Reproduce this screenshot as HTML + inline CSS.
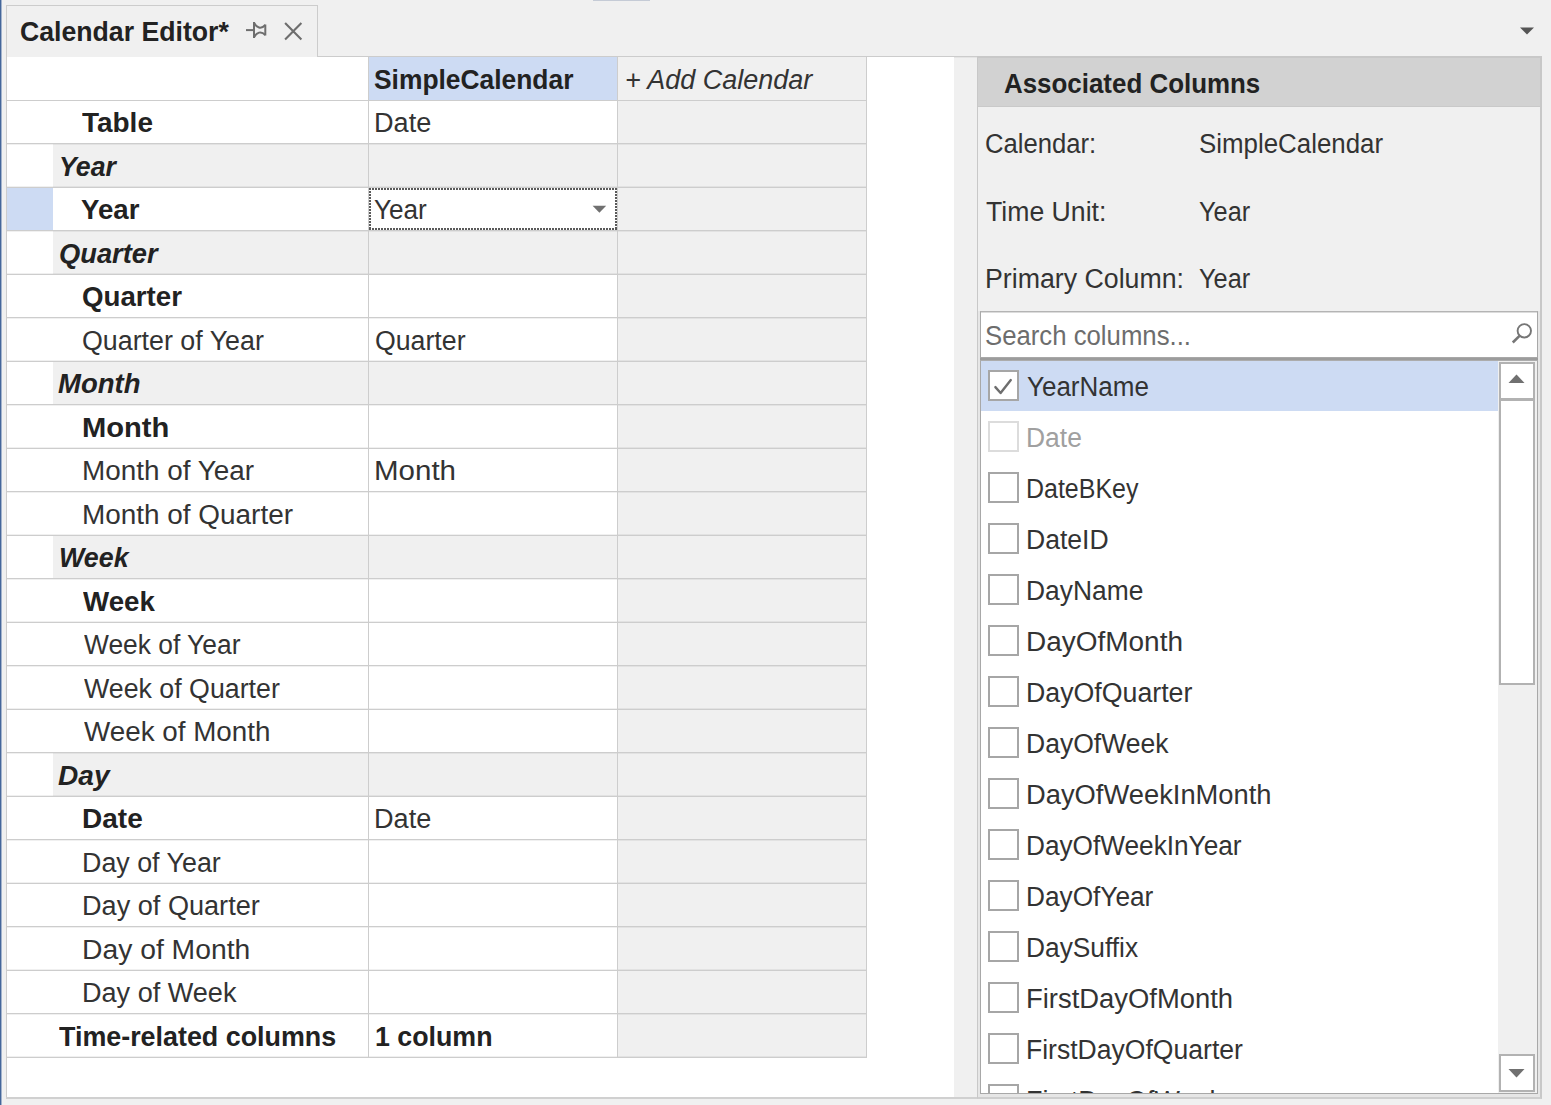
<!DOCTYPE html>
<html><head><meta charset="utf-8"><style>
html,body{margin:0;padding:0;}
body{width:1551px;height:1105px;overflow:hidden;position:relative;background:#f0f0f0;font-family:"Liberation Sans",sans-serif;}
.t{position:absolute;white-space:pre;line-height:1;transform-origin:0 0;}
</style></head><body>
<div style="position:absolute;left:0px;top:0px;width:1px;height:1105px;background:#44669a;"></div>
<div style="position:absolute;left:1px;top:0px;width:1px;height:1105px;background:#a3b3cc;"></div>
<div style="position:absolute;left:593px;top:0px;width:57px;height:1px;background:#c5cbd6;"></div>
<div style="position:absolute;left:6px;top:5px;width:312px;height:52px;background:#f0f0f0;box-sizing:border-box;border:1px solid #cccccc;border-bottom:none;"></div>
<div class="t" style="left:20.11px;top:19px;font-size:27px;font-weight:bold;font-style:normal;color:#222222;transform:scaleX(0.9872)">Calendar Editor*</div>
<svg style="position:absolute;left:240px;top:15px" width="70" height="30" viewBox="240 15 70 30">
<g stroke="#6e6e6e" stroke-width="2" fill="none" stroke-linecap="butt">
<path d="M246 30.1 H254"/>
<path d="M254 22 V38"/>
<path d="M254 22.6 C256.5 27.8 261 29.6 265.3 25"/>
<path d="M254 37.4 C256.5 32.3 261 30.6 265.3 35"/>
<path d="M265.3 24.5 V35.5"/>
</g>
<path d="M285.1 22.9 L301.4 39.4 M301.4 22.9 L285.1 39.4" stroke="#6e6e6e" stroke-width="2.1" fill="none"/>
</svg>
<div style="position:absolute;left:317px;top:56px;width:1225px;height:1px;background:#cccccc;"></div>
<div style="position:absolute;left:317px;top:57px;width:660px;height:1px;background:#e4e4e4;"></div>
<svg style="position:absolute;left:1519px;top:27px" width="16" height="8" viewBox="0 0 16 8"><path d="M1 0.5 H15 L8 7.5 Z" fill="#555"/></svg>
<div style="position:absolute;left:6px;top:57px;width:1px;height:1041px;background:#cccccc;"></div>
<div style="position:absolute;left:7px;top:57px;width:947px;height:1040px;background:#ffffff;"></div>
<div style="position:absolute;left:6px;top:1097px;width:972px;height:2px;background:#d0d0d0;"></div>
<div style="position:absolute;left:369px;top:57px;width:248px;height:43px;background:#cddbf3;"></div>
<div style="position:absolute;left:618px;top:57px;width:248px;height:43px;background:#f0f0f0;"></div>
<div class="t" style="left:374.02px;top:67px;font-size:27px;font-weight:bold;font-style:normal;color:#222222;transform:scaleX(0.9773)">SimpleCalendar</div>
<div class="t" style="left:625.00px;top:67px;font-size:27px;font-weight:normal;font-style:italic;color:#333333;transform:scaleX(0.9989)">+ Add Calendar</div>
<div class="t" style="left:82.40px;top:110px;font-size:27px;font-weight:bold;font-style:normal;color:#222222;transform:scaleX(1.0353)">Table</div>
<div class="t" style="left:374.09px;top:110px;font-size:27px;font-weight:normal;font-style:normal;color:#333333;transform:scaleX(1.0037)">Date</div>
<div style="position:absolute;left:618px;top:101px;width:248px;height:42px;background:#f0f0f0;"></div>
<div style="position:absolute;left:53px;top:144px;width:315px;height:43px;background:#f0f0f0;"></div>
<div style="position:absolute;left:369px;top:144px;width:248px;height:43px;background:#f0f0f0;"></div>
<div class="t" style="left:58.52px;top:154px;font-size:27px;font-weight:bold;font-style:italic;color:#222222;transform:scaleX(0.9895)">Year</div>
<div style="position:absolute;left:618px;top:144px;width:248px;height:43px;background:#f0f0f0;"></div>
<div style="position:absolute;left:7px;top:188px;width:46px;height:42px;background:#cddbf3;"></div>
<div class="t" style="left:81.18px;top:197px;font-size:27px;font-weight:bold;font-style:normal;color:#222222;transform:scaleX(1.0232)">Year</div>
<div class="t" style="left:374.13px;top:197px;font-size:27px;font-weight:normal;font-style:normal;color:#333333;transform:scaleX(0.9679)">Year</div>
<div style="position:absolute;left:618px;top:188px;width:248px;height:42px;background:#f0f0f0;"></div>
<div style="position:absolute;left:53px;top:231px;width:315px;height:43px;background:#f0f0f0;"></div>
<div style="position:absolute;left:369px;top:231px;width:248px;height:43px;background:#f0f0f0;"></div>
<div class="t" style="left:58.69px;top:241px;font-size:27px;font-weight:bold;font-style:italic;color:#222222;transform:scaleX(1.0112)">Quarter</div>
<div style="position:absolute;left:618px;top:231px;width:248px;height:43px;background:#f0f0f0;"></div>
<div class="t" style="left:81.97px;top:284px;font-size:27px;font-weight:bold;font-style:normal;color:#222222;transform:scaleX(1.0250)">Quarter</div>
<div style="position:absolute;left:618px;top:275px;width:248px;height:42px;background:#f0f0f0;"></div>
<div class="t" style="left:82.01px;top:328px;font-size:27px;font-weight:normal;font-style:normal;color:#333333;transform:scaleX(0.9929)">Quarter of Year</div>
<div class="t" style="left:374.81px;top:328px;font-size:27px;font-weight:normal;font-style:normal;color:#333333;transform:scaleX(0.9889)">Quarter</div>
<div style="position:absolute;left:618px;top:318px;width:248px;height:43px;background:#f0f0f0;"></div>
<div style="position:absolute;left:53px;top:362px;width:315px;height:42px;background:#f0f0f0;"></div>
<div style="position:absolute;left:369px;top:362px;width:248px;height:42px;background:#f0f0f0;"></div>
<div class="t" style="left:58.28px;top:371px;font-size:27px;font-weight:bold;font-style:italic;color:#222222;transform:scaleX(1.0190)">Month</div>
<div style="position:absolute;left:618px;top:362px;width:248px;height:42px;background:#f0f0f0;"></div>
<div class="t" style="left:81.64px;top:415px;font-size:27px;font-weight:bold;font-style:normal;color:#222222;transform:scaleX(1.0792)">Month</div>
<div style="position:absolute;left:618px;top:405px;width:248px;height:43px;background:#f0f0f0;"></div>
<div class="t" style="left:81.74px;top:458px;font-size:27px;font-weight:normal;font-style:normal;color:#333333;transform:scaleX(1.0323)">Month of Year</div>
<div class="t" style="left:373.91px;top:458px;font-size:27px;font-weight:normal;font-style:normal;color:#333333;transform:scaleX(1.0930)">Month</div>
<div style="position:absolute;left:618px;top:449px;width:248px;height:42px;background:#f0f0f0;"></div>
<div class="t" style="left:81.73px;top:502px;font-size:27px;font-weight:normal;font-style:normal;color:#333333;transform:scaleX(1.0337)">Month of Quarter</div>
<div style="position:absolute;left:618px;top:492px;width:248px;height:43px;background:#f0f0f0;"></div>
<div style="position:absolute;left:53px;top:536px;width:315px;height:42px;background:#f0f0f0;"></div>
<div style="position:absolute;left:369px;top:536px;width:248px;height:42px;background:#f0f0f0;"></div>
<div class="t" style="left:58.51px;top:545px;font-size:27px;font-weight:bold;font-style:italic;color:#222222;transform:scaleX(0.9928)">Week</div>
<div style="position:absolute;left:618px;top:536px;width:248px;height:42px;background:#f0f0f0;"></div>
<div class="t" style="left:83.00px;top:589px;font-size:27px;font-weight:bold;font-style:normal;color:#222222;transform:scaleX(1.0257)">Week</div>
<div style="position:absolute;left:618px;top:579px;width:248px;height:43px;background:#f0f0f0;"></div>
<div class="t" style="left:83.80px;top:632px;font-size:27px;font-weight:normal;font-style:normal;color:#333333;transform:scaleX(0.9769)">Week of Year</div>
<div style="position:absolute;left:618px;top:623px;width:248px;height:42px;background:#f0f0f0;"></div>
<div class="t" style="left:83.80px;top:676px;font-size:27px;font-weight:normal;font-style:normal;color:#333333;transform:scaleX(0.9909)">Week of Quarter</div>
<div style="position:absolute;left:618px;top:666px;width:248px;height:43px;background:#f0f0f0;"></div>
<div class="t" style="left:83.80px;top:719px;font-size:27px;font-weight:normal;font-style:normal;color:#333333;transform:scaleX(1.0291)">Week of Month</div>
<div style="position:absolute;left:618px;top:710px;width:248px;height:42px;background:#f0f0f0;"></div>
<div style="position:absolute;left:53px;top:753px;width:315px;height:43px;background:#f0f0f0;"></div>
<div style="position:absolute;left:369px;top:753px;width:248px;height:43px;background:#f0f0f0;"></div>
<div class="t" style="left:58.26px;top:763px;font-size:27px;font-weight:bold;font-style:italic;color:#222222;transform:scaleX(1.0400)">Day</div>
<div style="position:absolute;left:618px;top:753px;width:248px;height:43px;background:#f0f0f0;"></div>
<div class="t" style="left:81.72px;top:806px;font-size:27px;font-weight:bold;font-style:normal;color:#222222;transform:scaleX(1.0375)">Date</div>
<div class="t" style="left:374.09px;top:806px;font-size:27px;font-weight:normal;font-style:normal;color:#333333;transform:scaleX(1.0037)">Date</div>
<div style="position:absolute;left:618px;top:797px;width:248px;height:42px;background:#f0f0f0;"></div>
<div class="t" style="left:81.81px;top:850px;font-size:27px;font-weight:normal;font-style:normal;color:#333333;transform:scaleX(0.9942)">Day of Year</div>
<div style="position:absolute;left:618px;top:840px;width:248px;height:43px;background:#f0f0f0;"></div>
<div class="t" style="left:81.79px;top:893px;font-size:27px;font-weight:normal;font-style:normal;color:#333333;transform:scaleX(1.0040)">Day of Quarter</div>
<div style="position:absolute;left:618px;top:884px;width:248px;height:42px;background:#f0f0f0;"></div>
<div class="t" style="left:81.70px;top:937px;font-size:27px;font-weight:normal;font-style:normal;color:#333333;transform:scaleX(1.0478)">Day of Month</div>
<div style="position:absolute;left:618px;top:927px;width:248px;height:43px;background:#f0f0f0;"></div>
<div class="t" style="left:81.79px;top:980px;font-size:27px;font-weight:normal;font-style:normal;color:#333333;transform:scaleX(1.0026)">Day of Week</div>
<div style="position:absolute;left:618px;top:971px;width:248px;height:42px;background:#f0f0f0;"></div>
<div class="t" style="left:59.30px;top:1024px;font-size:27px;font-weight:bold;font-style:normal;color:#222222;transform:scaleX(0.9950)">Time-related columns</div>
<div class="t" style="left:375.32px;top:1024px;font-size:27px;font-weight:bold;font-style:normal;color:#222222;transform:scaleX(0.9913)">1 column</div>
<div style="position:absolute;left:618px;top:1014px;width:248px;height:43px;background:#f0f0f0;"></div>
<div style="position:absolute;left:7px;top:100px;width:860px;height:1px;background:#cdcdcd;"></div>
<div style="position:absolute;left:7px;top:143px;width:860px;height:1px;background:#cdcdcd;"></div>
<div style="position:absolute;left:7px;top:144px;width:860px;height:1px;background:rgba(90,90,90,0.09);"></div>
<div style="position:absolute;left:7px;top:187px;width:860px;height:1px;background:#cdcdcd;"></div>
<div style="position:absolute;left:7px;top:186px;width:860px;height:1px;background:rgba(90,90,90,0.09);"></div>
<div style="position:absolute;left:7px;top:230px;width:860px;height:1px;background:#cdcdcd;"></div>
<div style="position:absolute;left:7px;top:231px;width:860px;height:1px;background:rgba(90,90,90,0.09);"></div>
<div style="position:absolute;left:7px;top:274px;width:860px;height:1px;background:#cdcdcd;"></div>
<div style="position:absolute;left:7px;top:273px;width:860px;height:1px;background:rgba(90,90,90,0.09);"></div>
<div style="position:absolute;left:7px;top:317px;width:860px;height:1px;background:#cdcdcd;"></div>
<div style="position:absolute;left:7px;top:318px;width:860px;height:1px;background:rgba(90,90,90,0.09);"></div>
<div style="position:absolute;left:7px;top:361px;width:860px;height:1px;background:#cdcdcd;"></div>
<div style="position:absolute;left:7px;top:360px;width:860px;height:1px;background:rgba(90,90,90,0.09);"></div>
<div style="position:absolute;left:7px;top:404px;width:860px;height:1px;background:#cdcdcd;"></div>
<div style="position:absolute;left:7px;top:405px;width:860px;height:1px;background:rgba(90,90,90,0.09);"></div>
<div style="position:absolute;left:7px;top:448px;width:860px;height:1px;background:#cdcdcd;"></div>
<div style="position:absolute;left:7px;top:447px;width:860px;height:1px;background:rgba(90,90,90,0.09);"></div>
<div style="position:absolute;left:7px;top:491px;width:860px;height:1px;background:#cdcdcd;"></div>
<div style="position:absolute;left:7px;top:492px;width:860px;height:1px;background:rgba(90,90,90,0.09);"></div>
<div style="position:absolute;left:7px;top:535px;width:860px;height:1px;background:#cdcdcd;"></div>
<div style="position:absolute;left:7px;top:534px;width:860px;height:1px;background:rgba(90,90,90,0.09);"></div>
<div style="position:absolute;left:7px;top:578px;width:860px;height:1px;background:#cdcdcd;"></div>
<div style="position:absolute;left:7px;top:579px;width:860px;height:1px;background:rgba(90,90,90,0.09);"></div>
<div style="position:absolute;left:7px;top:622px;width:860px;height:1px;background:#cdcdcd;"></div>
<div style="position:absolute;left:7px;top:621px;width:860px;height:1px;background:rgba(90,90,90,0.09);"></div>
<div style="position:absolute;left:7px;top:665px;width:860px;height:1px;background:#cdcdcd;"></div>
<div style="position:absolute;left:7px;top:666px;width:860px;height:1px;background:rgba(90,90,90,0.09);"></div>
<div style="position:absolute;left:7px;top:709px;width:860px;height:1px;background:#cdcdcd;"></div>
<div style="position:absolute;left:7px;top:708px;width:860px;height:1px;background:rgba(90,90,90,0.09);"></div>
<div style="position:absolute;left:7px;top:752px;width:860px;height:1px;background:#cdcdcd;"></div>
<div style="position:absolute;left:7px;top:753px;width:860px;height:1px;background:rgba(90,90,90,0.09);"></div>
<div style="position:absolute;left:7px;top:796px;width:860px;height:1px;background:#cdcdcd;"></div>
<div style="position:absolute;left:7px;top:795px;width:860px;height:1px;background:rgba(90,90,90,0.09);"></div>
<div style="position:absolute;left:7px;top:839px;width:860px;height:1px;background:#cdcdcd;"></div>
<div style="position:absolute;left:7px;top:840px;width:860px;height:1px;background:rgba(90,90,90,0.09);"></div>
<div style="position:absolute;left:7px;top:883px;width:860px;height:1px;background:#cdcdcd;"></div>
<div style="position:absolute;left:7px;top:882px;width:860px;height:1px;background:rgba(90,90,90,0.09);"></div>
<div style="position:absolute;left:7px;top:926px;width:860px;height:1px;background:#cdcdcd;"></div>
<div style="position:absolute;left:7px;top:927px;width:860px;height:1px;background:rgba(90,90,90,0.09);"></div>
<div style="position:absolute;left:7px;top:970px;width:860px;height:1px;background:#cdcdcd;"></div>
<div style="position:absolute;left:7px;top:969px;width:860px;height:1px;background:rgba(90,90,90,0.09);"></div>
<div style="position:absolute;left:7px;top:1013px;width:860px;height:1px;background:#cdcdcd;"></div>
<div style="position:absolute;left:7px;top:1014px;width:860px;height:1px;background:rgba(90,90,90,0.09);"></div>
<div style="position:absolute;left:7px;top:1057px;width:860px;height:1px;background:#cdcdcd;"></div>
<div style="position:absolute;left:7px;top:1056px;width:860px;height:1px;background:rgba(90,90,90,0.09);"></div>
<div style="position:absolute;left:368px;top:57px;width:1px;height:1001px;background:#cdcdcd;"></div>
<div style="position:absolute;left:617px;top:57px;width:1px;height:1001px;background:#cdcdcd;"></div>
<div style="position:absolute;left:866px;top:57px;width:1px;height:1001px;background:#cdcdcd;"></div>
<div style="position:absolute;left:369px;top:188px;width:248px;height:2px;background:repeating-linear-gradient(90deg,#5a5a5a 0 2px,transparent 2px 3px)"></div>
<div style="position:absolute;left:369px;top:228px;width:248px;height:2px;background:repeating-linear-gradient(90deg,#5a5a5a 0 2px,transparent 2px 3px)"></div>
<div style="position:absolute;left:369px;top:188px;width:2px;height:42px;background:repeating-linear-gradient(180deg,#5a5a5a 0 2px,transparent 2px 3px)"></div>
<div style="position:absolute;left:615px;top:188px;width:2px;height:42px;background:repeating-linear-gradient(180deg,#5a5a5a 0 2px,transparent 2px 3px)"></div>
<svg style="position:absolute;left:590px;top:200px" width="20" height="20" viewBox="590 200 20 20"><path d="M592.6 205.8 H606.2 L599.4 212.8 Z" fill="#707070"/></svg>
<div style="position:absolute;left:977px;top:56px;width:565px;height:1043px;background:#f0f0f0;box-sizing:border-box;border-left:1px solid #c8c8c8;border-right:2px solid #c8c8c8;border-top:2px solid #c8c8c8;border-bottom:2px solid #cecece;"></div>
<div style="position:absolute;left:978px;top:311px;width:562px;height:786px;background:#e6e6e6;"></div>
<div style="position:absolute;left:978px;top:58px;width:562px;height:48px;background:#d2d2d2;"></div>
<div style="position:absolute;left:978px;top:106px;width:562px;height:1px;background:#c9c9c9;"></div>
<div class="t" style="left:1003.74px;top:71px;font-size:27px;font-weight:bold;font-style:normal;color:#222222;transform:scaleX(0.9596)">Associated Columns</div>
<div class="t" style="left:985.45px;top:131px;font-size:27px;font-weight:normal;font-style:normal;color:#333333;transform:scaleX(0.9500)">Calendar:</div>
<div class="t" style="left:1198.74px;top:131px;font-size:27px;font-weight:normal;font-style:normal;color:#333333;transform:scaleX(0.9581)">SimpleCalendar</div>
<div class="t" style="left:985.51px;top:199px;font-size:27px;font-weight:normal;font-style:normal;color:#333333;transform:scaleX(0.9866)">Time Unit:</div>
<div class="t" style="left:1198.56px;top:199px;font-size:27px;font-weight:normal;font-style:normal;color:#333333;transform:scaleX(0.9377)">Year</div>
<div class="t" style="left:984.52px;top:266px;font-size:27px;font-weight:normal;font-style:normal;color:#333333;transform:scaleX(0.9898)">Primary Column:</div>
<div class="t" style="left:1198.56px;top:266px;font-size:27px;font-weight:normal;font-style:normal;color:#333333;transform:scaleX(0.9377)">Year</div>
<div style="position:absolute;left:980px;top:311px;width:558px;height:47px;background:#ffffff;box-sizing:border-box;border:1px solid #a8a8a8;border-top-color:#b4b4b4;box-shadow:inset 0 1px 0 #dcdcdc;"></div>
<div class="t" style="left:985.05px;top:323px;font-size:27px;font-weight:normal;font-style:normal;color:#6d6d6d;transform:scaleX(0.9531)">Search columns...</div>
<svg style="position:absolute;left:1495px;top:305px" width="50" height="60" viewBox="1495 305 50 60">
<circle cx="1524.3" cy="330.8" r="6.7" stroke="#767676" stroke-width="1.9" fill="none"/>
<path d="M1519.5 335.8 L1512.8 342.5" stroke="#767676" stroke-width="2.6" fill="none"/>
</svg>
<div style="position:absolute;left:980px;top:359px;width:558px;height:735px;background:#ffffff;box-sizing:border-box;border:1px solid #a8a8a8;border-top:none;"></div>
<div style="position:absolute;left:980px;top:358px;width:558px;height:2px;background:#9c9c9c;"></div>
<div style="position:absolute;left:980px;top:360px;width:558px;height:1px;background:#acacac;"></div>
<div style="position:absolute;left:981px;top:361px;width:517px;height:50px;background:#cddbf3;"></div>
<div style="position:absolute;left:981px;top:359px;width:556px;height:734px;overflow:hidden">
<div style="position:absolute;left:7px;top:11px;width:31px;height:31px;box-sizing:border-box;border:2px solid #a6a6a6;background:#fff"></div>
<div class="t" style="left:46.04px;top:15px;font-size:27px;font-weight:normal;font-style:normal;color:#333333;transform:scaleX(0.9629)">YearName</div>
<div style="position:absolute;left:7px;top:62px;width:31px;height:31px;box-sizing:border-box;border:2px solid #dcdcdc;background:#fff"></div>
<div class="t" style="left:45.04px;top:66px;font-size:27px;font-weight:normal;font-style:normal;color:#a0a0a0;transform:scaleX(0.9796)">Date</div>
<div style="position:absolute;left:7px;top:113px;width:31px;height:31px;box-sizing:border-box;border:2px solid #a6a6a6;background:#fff"></div>
<div class="t" style="left:45.15px;top:117px;font-size:27px;font-weight:normal;font-style:normal;color:#333333;transform:scaleX(0.9252)">DateBKey</div>
<div style="position:absolute;left:7px;top:164px;width:31px;height:31px;box-sizing:border-box;border:2px solid #a6a6a6;background:#fff"></div>
<div class="t" style="left:45.03px;top:168px;font-size:27px;font-weight:normal;font-style:normal;color:#333333;transform:scaleX(0.9840)">DateID</div>
<div style="position:absolute;left:7px;top:215px;width:31px;height:31px;box-sizing:border-box;border:2px solid #a6a6a6;background:#fff"></div>
<div class="t" style="left:45.04px;top:219px;font-size:27px;font-weight:normal;font-style:normal;color:#333333;transform:scaleX(0.9778)">DayName</div>
<div style="position:absolute;left:7px;top:266px;width:31px;height:31px;box-sizing:border-box;border:2px solid #a6a6a6;background:#fff"></div>
<div class="t" style="left:44.93px;top:270px;font-size:27px;font-weight:normal;font-style:normal;color:#333333;transform:scaleX(1.0358)">DayOfMonth</div>
<div style="position:absolute;left:7px;top:317px;width:31px;height:31px;box-sizing:border-box;border:2px solid #a6a6a6;background:#fff"></div>
<div class="t" style="left:45.02px;top:321px;font-size:27px;font-weight:normal;font-style:normal;color:#333333;transform:scaleX(0.9898)">DayOfQuarter</div>
<div style="position:absolute;left:7px;top:368px;width:31px;height:31px;box-sizing:border-box;border:2px solid #a6a6a6;background:#fff"></div>
<div class="t" style="left:45.03px;top:372px;font-size:27px;font-weight:normal;font-style:normal;color:#333333;transform:scaleX(0.9825)">DayOfWeek</div>
<div style="position:absolute;left:7px;top:419px;width:31px;height:31px;box-sizing:border-box;border:2px solid #a6a6a6;background:#fff"></div>
<div class="t" style="left:44.98px;top:423px;font-size:27px;font-weight:normal;font-style:normal;color:#333333;transform:scaleX(1.0121)">DayOfWeekInMonth</div>
<div style="position:absolute;left:7px;top:470px;width:31px;height:31px;box-sizing:border-box;border:2px solid #a6a6a6;background:#fff"></div>
<div class="t" style="left:45.06px;top:474px;font-size:27px;font-weight:normal;font-style:normal;color:#333333;transform:scaleX(0.9705)">DayOfWeekInYear</div>
<div style="position:absolute;left:7px;top:521px;width:31px;height:31px;box-sizing:border-box;border:2px solid #a6a6a6;background:#fff"></div>
<div class="t" style="left:45.06px;top:525px;font-size:27px;font-weight:normal;font-style:normal;color:#333333;transform:scaleX(0.9713)">DayOfYear</div>
<div style="position:absolute;left:7px;top:572px;width:31px;height:31px;box-sizing:border-box;border:2px solid #a6a6a6;background:#fff"></div>
<div class="t" style="left:45.05px;top:576px;font-size:27px;font-weight:normal;font-style:normal;color:#333333;transform:scaleX(0.9743)">DaySuffix</div>
<div style="position:absolute;left:7px;top:623px;width:31px;height:31px;box-sizing:border-box;border:2px solid #a6a6a6;background:#fff"></div>
<div class="t" style="left:44.97px;top:627px;font-size:27px;font-weight:normal;font-style:normal;color:#333333;transform:scaleX(1.0150)">FirstDayOfMonth</div>
<div style="position:absolute;left:7px;top:674px;width:31px;height:31px;box-sizing:border-box;border:2px solid #a6a6a6;background:#fff"></div>
<div class="t" style="left:45.03px;top:678px;font-size:27px;font-weight:normal;font-style:normal;color:#333333;transform:scaleX(0.9835)">FirstDayOfQuarter</div>
<div style="position:absolute;left:7px;top:725px;width:31px;height:31px;box-sizing:border-box;border:2px solid #a6a6a6;background:#fff"></div>
<div class="t" style="left:45.01px;top:729px;font-size:27px;font-weight:normal;font-style:normal;color:#333333;transform:scaleX(0.9967)">FirstDayOfWeek</div>
</div>
<svg style="position:absolute;left:980px;top:360px" width="50" height="50" viewBox="980 360 50 50"><path d="M995.4 387.1 L1000.6 393 L1010.8 380.1" stroke="#6e6e6e" stroke-width="2.4" stroke-linecap="round" stroke-linejoin="round" fill="none"/></svg>
<div style="position:absolute;left:1498px;top:361px;width:39px;height:732px;background:#f0f0f0;"></div>
<div style="position:absolute;left:1499px;top:362px;width:36px;height:38px;background:#ffffff;box-sizing:border-box;border:2px solid #b2b2b2;"></div>
<svg style="position:absolute;left:1508px;top:374px" width="17" height="10" viewBox="0 0 17 10"><path d="M0.5 9 L8.5 0.5 L16.5 9 Z" fill="#707070"/></svg>
<div style="position:absolute;left:1499px;top:399px;width:36px;height:286px;background:#ffffff;box-sizing:border-box;border:2px solid #b2b2b2;"></div>
<div style="position:absolute;left:1499px;top:1054px;width:36px;height:38px;background:#ffffff;box-sizing:border-box;border:2px solid #b2b2b2;"></div>
<svg style="position:absolute;left:1508px;top:1068px" width="17" height="10" viewBox="0 0 17 10"><path d="M0.5 1 L8.5 9.5 L16.5 1 Z" fill="#707070"/></svg>
</body></html>
